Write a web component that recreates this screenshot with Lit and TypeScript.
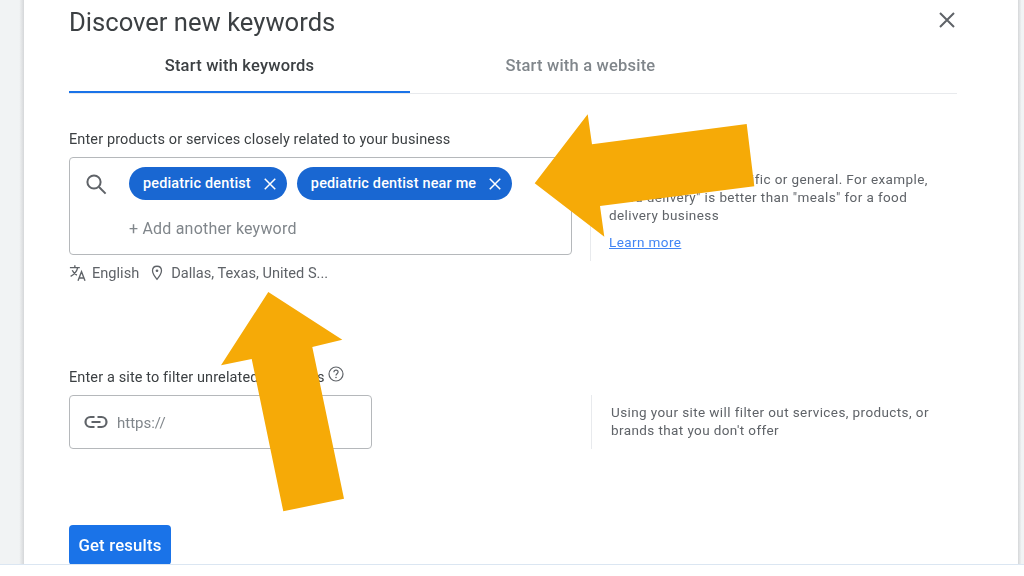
import { LitElement, css, html, svg } from 'lit';
import { customElement } from 'lit/decorators.js';

const closeIcon = (cls: string) => html`
  <svg class=${cls} viewBox="0 0 24 24"><path d="M5 5l14 14M19 5L5 19" fill="none" stroke="currentColor" stroke-width="2"/></svg>
`;

const searchIcon = html`
  <svg class="field-icon" viewBox="0 0 24 24"><circle cx="10" cy="10" r="6.6" fill="none" stroke="currentColor" stroke-width="2"/><path d="M15 15l6.6 6.6" fill="none" stroke="currentColor" stroke-width="2"/></svg>
`;

const linkIcon = html`
  <svg class="field-icon" viewBox="0 0 24 24"><path d="M10.5 7H6.5a5 5 0 0 0 0 10h4M13.500 7h4a5 5 0 0 1 0 10h-4M7.500 12h9" fill="none" stroke="currentColor" stroke-width="2.200"/></svg>
`;

const translateIcon = html`
  <svg class="meta-icon" viewBox="0 0 20 20"><path d="M1 4h11M6.500 1.500V4M9.700 4C8.700 8 5.500 11.700 1.800 13.800M3.600 7c1 2.300 3.200 4.400 5.200 5.400M10 18.500l3.900-10 3.900 10M11.200 15.500h5.400" fill="none" stroke="currentColor" stroke-width="1.500"/></svg>
`;

const pinIcon = html`
  <svg class="meta-icon" viewBox="0 0 20 20"><path d="M10 2.500c-2.900 0-5 2.100-5 5 0 3.400 5 9.500 5 9.500s5-6.100 5-9.500c0-2.900-2.100-5-5-5z" fill="none" stroke="currentColor" stroke-width="1.400"/><circle cx="10" cy="7.500" r="1.500" fill="currentColor"/></svg>
`;

const helpIcon = html`
  <svg class="help-icon" viewBox="0 0 16 16"><circle cx="8" cy="8" r="7" fill="none" stroke="currentColor" stroke-width="1.200"/><path d="M5.900 6.200C5.900 5 6.800 4.200 8 4.200s2.100.8 2.100 1.900c0 1.500-2.100 1.700-2.100 3.300" fill="none" stroke="currentColor" stroke-width="1.200"/><circle cx="8" cy="11.500" r=".8" fill="currentColor"/></svg>
`;

const arrows = svg`
  <polygon points="534.700,183.300 587.700,114.300 592,144.300 746.700,124 754.300,186.300 600,206 604.300,236.700"/>
  <polygon points="268.300,292 342.300,339.700 312.300,347 344,498.700 283.300,511.300 251.700,359 221,365.300"/>
`;

@customElement('app-root')
export class AppRoot extends LitElement {
  static styles = css`
    :host {
      display: block;
      position: relative;
      width: 1024px;
      height: 576px;
      overflow: hidden;
      background: #fff;
      font-family: Roboto, 'Liberation Sans', sans-serif;
      color: #3c4043;
    }
    .shell {
      display: flex;
      height: 564px;
      border-bottom: 1px solid #dbe6f2;
      filter: blur(0.5px);
    }
    .gutter {
      background: #f1f3f4;
    }
    .gutter.left {
      width: 24px;
      background: linear-gradient(90deg, #f1f3f4 80%, #d5d7d9);
    }
    .gutter.right {
      width: 6px;
      margin-left: auto;
      background: linear-gradient(90deg, #d5d7d9, #f1f3f4 60%);
    }
    .card {
      width: 888px;
      height: 564px;
      overflow: hidden;
      padding-left: 45px;
      flex: none;
    }
    .head {
      display: flex;
      justify-content: space-between;
      align-items: center;
      height: 28px;
      padding-top: 8px;
    }
    h1 {
      margin: 0;
      font-size: 25.6px;
      line-height: 28px;
      font-weight: 400;
      color: #3c4043;
    }
    .close {
      width: 24px;
      height: 24px;
      margin-right: -2px;
      margin-top: -4px;
      color: #5f6368;
    }
    .tabs {
      display: flex;
      height: 57px;
      border-bottom: 1px solid #e8eaed;
    }
    .tab {
      width: 341px;
      box-sizing: border-box;
      height: 57px;
      padding-top: 20px;
      text-align: center;
      font-size: 16.5px;
      line-height: 20px;
      font-weight: 500;
      letter-spacing: 0.2px;
      color: #80868b;
    }
    .tab.active {
      color: #3c4043;
      border-bottom: 2px solid #1a73e8;
    }
    .label {
      display: flex;
      align-items: center;
      font-size: 14.5px;
      line-height: 20px;
      letter-spacing: 0.12px;
      color: #3c4043;
    }
    .keywords {
      margin-top: 36px;
    }
    .row {
      display: flex;
      margin-top: 7px;
    }
    .field {
      display: flex;
      flex: none;
      box-sizing: border-box;
      border: 1px solid #b5b8bb;
      border-radius: 4px;
      color: #5f6368;
    }
    .field-icon {
      flex: none;
      width: 24px;
      height: 24px;
    }
    .field.big {
      width: 503px;
      height: 98px;
      padding: 9px 0 0 14px;
    }
    .field.big .field-icon {
      margin: 5px 21px 0 0;
    }
    .chips {
      display: flex;
      gap: 10px;
    }
    .chip {
      display: flex;
      align-items: center;
      height: 33px;
      padding: 0 8px 0 14px;
      border-radius: 17px;
      background: #1967d2;
      color: #fff;
      font-size: 14.4px;
      font-weight: 500;
      letter-spacing: 0.2px;
      white-space: nowrap;
    }
    .chip-x {
      width: 18px;
      height: 18px;
      margin-left: 10px;
    }
    .add {
      margin-top: 19px;
      font-size: 16px;
      line-height: 20px;
      color: #80868b;
      letter-spacing: 0.2px;
    }
    .hint {
      box-sizing: border-box;
      margin-left: 18px;
      padding-left: 18px;
      border-left: 1px solid #e8eaed;
      width: 350px;
      height: 104px;
      padding-top: 13px;
      font-size: 13.5px;
      line-height: 18px;
      letter-spacing: 0.4px;
      color: #5f6368;
    }
    .hint a {
      display: block;
      margin-top: 9px;
      color: #4285f4;
      text-decoration: underline;
    }
    .meta {
      display: flex;
      align-items: center;
      height: 18px;
      margin-top: 3px;
      font-size: 14.6px;
      color: #5f6368;
    }
    .meta-icon {
      width: 18px;
      height: 18px;
      margin-right: 5px;
    }
    .meta span {
      margin-right: 9px;
    }
    .site {
      margin-top: 86px;
    }
    .field.small {
      width: 303px;
      height: 54px;
      align-items: center;
      padding-left: 14px;
    }
    .field.small .field-icon {
      margin-right: 9px;
    }
    .url {
      font-size: 15px;
      line-height: 20px;
      padding-top: 1px;
      color: #80868b;
    }
    .hint.small {
      margin-left: 219px;
      padding-left: 19px;
      width: 340px;
      height: 54px;
      padding-top: 8px;
    }
    .help-icon {
      width: 16px;
      height: 16px;
      margin: -8px 0 0 3px;
      color: #5f6368;
    }
    button {
      display: block;
      width: 102px;
      height: 40px;
      margin-top: 76px;
      border: 0;
      padding: 0;
      border-radius: 4px;
      background: #1a73e8;
      color: #fff;
      font: 500 16.7px Roboto, sans-serif;
      letter-spacing: 0.2px;
    }
    .arrows {
      position: absolute;
      left: 0;
      top: 0;
      width: 1024px;
      height: 576px;
      fill: #f6aa07;
    }
  `;

  render() {
    return html`
      <div class="shell">
        <div class="gutter left"></div>
        <main class="card">
          <div class="head">
            <h1>Discover new keywords</h1>
            ${closeIcon('close')}
          </div>
          <div class="tabs">
            <div class="tab active">Start with keywords</div>
            <div class="tab">Start with a website</div>
          </div>
          <section class="keywords">
            <div class="label">Enter products or services closely related to your business</div>
            <div class="row">
              <div class="field big">
                ${searchIcon}
                <div>
                  <div class="chips">
                    <div class="chip">pediatric dentist${closeIcon('chip-x')}</div>
                    <div class="chip">pediatric dentist near me${closeIcon('chip-x')}</div>
                  </div>
                  <div class="add">+ Add another keyword</div>
                </div>
              </div>
              <div class="hint">
                Keywords can be specific or general. For example,<br />
                "food delivery" is better than "meals" for a food<br />
                delivery business
                <a>Learn more</a>
              </div>
            </div>
            <div class="meta">
              ${translateIcon}<span>English</span>
              ${pinIcon}<span>Dallas, Texas, United S...</span>
            </div>
          </section>
          <section class="site">
            <div class="label">Enter a site to filter unrelated keywords ${helpIcon}</div>
            <div class="row">
              <div class="field small">
                ${linkIcon}
                <div class="url">https://</div>
              </div>
              <div class="hint small">
                Using your site will filter out services, products, or<br />
                brands that you don't offer
              </div>
            </div>
          </section>
          <button>Get results</button>
        </main>
        <div class="gutter right"></div>
      </div>
      <svg class="arrows" viewBox="0 0 1024 576">${arrows}</svg>
    `;
  }
}
